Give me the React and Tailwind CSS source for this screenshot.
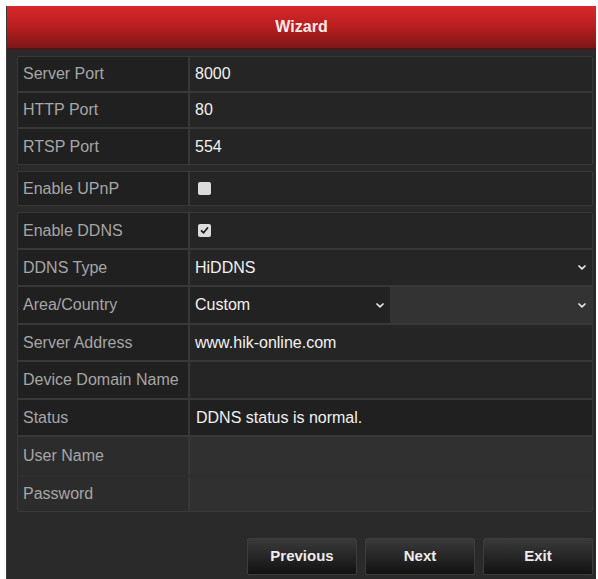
import React from "react";

const font = { fontFamily: '"Liberation Sans", Arial, sans-serif' };

function Chevron({ className = "" }) {
  return (
    <svg width="8" height="5" viewBox="0 0 8 5" className={className}>
      <path d="M1 1 L4 3.8 L7 1" fill="none" stroke="#e8e8e8" strokeWidth="1.7" strokeLinecap="round" strokeLinejoin="round" />
    </svg>
  );
}

function Check({ checked }) {
  return (
    <div className="w-[13px] h-[13px] bg-[#dcdcdc] rounded-[2px] flex items-center justify-center">
      {checked && (
        <svg width="9" height="9" viewBox="0 0 9 9">
          <path d="M1.5 4.8 L3.6 6.8 L7.5 2" fill="none" stroke="#222" strokeWidth="1.8" strokeLinecap="round" strokeLinejoin="round" />
        </svg>
      )}
    </div>
  );
}

function Row({ label, h, last, children, labelBg = "bg-[#202020]", valueBg = "bg-[#252525]", line = "border-[#383838]" }) {
  return (
    <div className={`flex ${last ? "" : `border-b-2 ${line}`}`} style={{ height: h }}>
      <div className={`w-[172px] shrink-0 flex items-center pl-[5px] text-[16px] text-[#a6a6a6] border-r-2 border-[#383838] ${labelBg}`}>
        {label}
      </div>
      <div className={`flex-1 flex items-center text-[16px] text-[#f2f2f2] ${valueBg}`}>{children}</div>
    </div>
  );
}

function Btn({ children }) {
  return (
    <div className="w-[110px] h-[37px] flex items-center justify-center border border-[#3c3c3c] bg-gradient-to-b from-[#3a3a3a] via-[#262626] to-[#121212] text-[15px] font-bold text-[#ececec] rounded-[2px]">
      {children}
    </div>
  );
}

export default function App() {
  return (
    <div className="w-[598px] h-[579px] bg-white pt-[6px] pl-[6px] pr-[2px] overflow-hidden" style={font}>
      <div className="h-full bg-[#2a2a2a] flex flex-col border-l border-[#3a3a3a]">
        <div className="h-[44px] shrink-0 flex items-center justify-center bg-gradient-to-b from-[#d8282a] via-[#b81e20] to-[#7e1618] border-b-2 border-[#4a1a1a] text-[#fbeaea] text-[16px] font-bold">
          Wizard
        </div>
        <div className="pl-[10px] pr-[3px] pt-[6px] flex flex-col">
          <div className="border border-[#383838] rounded-[2px] overflow-hidden">
            <Row label="Server Port" h={36}><span className="pl-[5px]">8000</span></Row>
            <Row label="HTTP Port" h={36}><span className="pl-[5px]">80</span></Row>
            <Row label="RTSP Port" h={35} last><span className="pl-[5px]">554</span></Row>
          </div>
          <div className="mt-[6px] border border-[#383838] rounded-[2px] overflow-hidden">
            <Row label="Enable UPnP" h={33} last><div className="pl-[8px]"><Check /></div></Row>
          </div>
          <div className="mt-[6px] border border-[#383838] rounded-[2px] overflow-hidden">
            <Row label="Enable DDNS" h={37}><div className="pl-[8px]"><Check checked /></div></Row>
            <Row label="DDNS Type" h={37}>
              <div className="flex-1 flex items-center justify-between pl-[5px] pr-[6px]">
                <span>HiDDNS</span>
                <Chevron />
              </div>
            </Row>
            <Row label="Area/Country" h={38}>
              <div className="w-[200px] h-full flex items-center justify-between pl-[5px] pr-[6px] bg-[#222222]">
                <span>Custom</span>
                <Chevron />
              </div>
              <div className="flex-1 h-full flex items-center justify-end pr-[6px] bg-[#333333]">
                <Chevron />
              </div>
            </Row>
            <Row label="Server Address" h={37}><span className="pl-[5px]">www.hik-online.com</span></Row>
            <Row label="Device Domain Name" h={38}><span /></Row>
            <Row label="Status" h={37} valueBg="bg-[#202020]"><span className="pl-[6px]">DDNS status is normal.</span></Row>
            <Row label="User Name" h={40} labelBg="bg-[#2c2c2c]" valueBg="bg-[#303030]" line="border-[#2e2e2e]"><span /></Row>
            <Row label="Password" h={34} last labelBg="bg-[#2c2c2c]" valueBg="bg-[#303030]"><span /></Row>
          </div>
          <div className="mt-[26px] flex justify-end gap-[8px]">
            <Btn>Previous</Btn>
            <Btn>Next</Btn>
            <Btn>Exit</Btn>
          </div>
        </div>
      </div>
    </div>
  );
}
